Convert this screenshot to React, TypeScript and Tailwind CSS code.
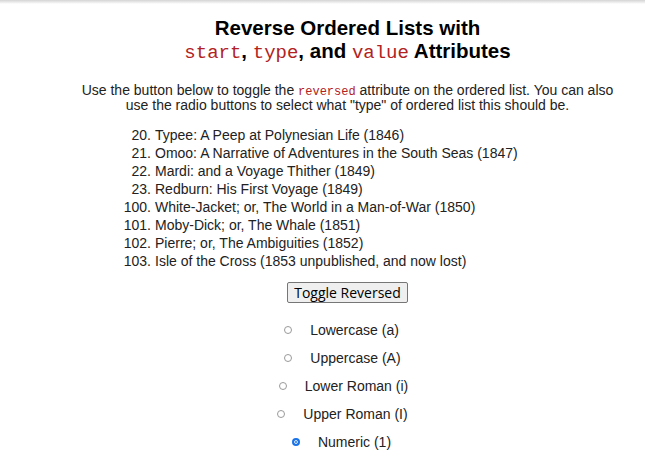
const books = [
  [20, "Typee: A Peep at Polynesian Life (1846)"],
  [21, "Omoo: A Narrative of Adventures in the South Seas (1847)"],
  [22, "Mardi: and a Voyage Thither (1849)"],
  [23, "Redburn: His First Voyage (1849)"],
  [100, "White-Jacket; or, The World in a Man-of-War (1850)"],
  [101, "Moby-Dick; or, The Whale (1851)"],
  [102, "Pierre; or, The Ambiguities (1852)"],
  [103, "Isle of the Cross (1853 unpublished, and now lost)"],
] as const;

const types = [
  { label: "Lowercase (a)", shift: "ml-[0px]" },
  { label: "Uppercase (A)", shift: "ml-[2px]" },
  { label: "Lower Roman (i)", shift: "ml-[4px]" },
  { label: "Upper Roman (I)", shift: "ml-[2px]" },
  { label: "Numeric (1)", checked: true, shift: "ml-[0px]" },
];

function Code({ children }: { children: string }) {
  return (
    <code className="font-['Liberation_Mono',monospace] font-normal text-[19px] text-[#b22222]">
      {children}
    </code>
  );
}

export default function App() {
  return (
    <div className="relative w-[645px] h-[468px] bg-white text-black font-['Liberation_Sans',Arial,sans-serif] overflow-hidden">
      <div className="absolute top-0 left-0 w-full h-[4px] bg-gradient-to-b from-[#d4d4d4] to-white" />
      <div className="flex flex-col items-center pl-[50px] pt-[16px]">
        <h2 className="text-[20.5px] leading-[23px] font-bold text-center">
          Reverse Ordered Lists with
          <br />
          <Code>start</Code>, <Code>type</Code>, and <Code>value</Code>{" "}
          Attributes
        </h2>

        <p className="mt-[18px] text-[14px] leading-[15px] text-center w-[545px] text-[#222]">
          Use the button below to toggle the{" "}
          <span className="font-['Liberation_Mono',monospace] text-[12px] leading-none text-[#b22222]">
            reversed
          </span>{" "}
          attribute on the ordered list. You can also use the radio buttons to
          select what "type" of ordered list this should be.
        </p>

        <ol className="mt-[13px] self-start ml-[61px] text-[14px] leading-[18px] text-[#222]">
          {books.map(([n, title]) => (
            <li key={n} className="flex">
              <span className="w-[40px] text-right mr-[4px]">{n}.</span>
              <span>{title}</span>
            </li>
          ))}
        </ol>

        <button className="mt-[12px] px-[6px] h-[21px] text-[14px] leading-[18px] font-['Open_Sans',sans-serif] bg-[#efefef] border border-[#767676] rounded-[2px] text-black">
          Toggle Reversed
        </button>

        <div className="mt-[18px] flex flex-col items-center gap-[10px] ml-[-12px]">
          {types.map((t) => (
            <label
              key={t.label}
              className={`flex items-center h-[18px] text-[14px] text-[#222] ${t.shift}`}
            >
              <span
                className={`w-[8px] h-[8px] rounded-full mr-[18px] ${
                  t.checked
                    ? "border-[2px] border-[#1a73e8] bg-[#1a73e8] ring-1 ring-inset ring-white"
                    : "border border-[#9a9a9a]"
                }`}
              />
              {t.label}
            </label>
          ))}
        </div>
      </div>
    </div>
  );
}
